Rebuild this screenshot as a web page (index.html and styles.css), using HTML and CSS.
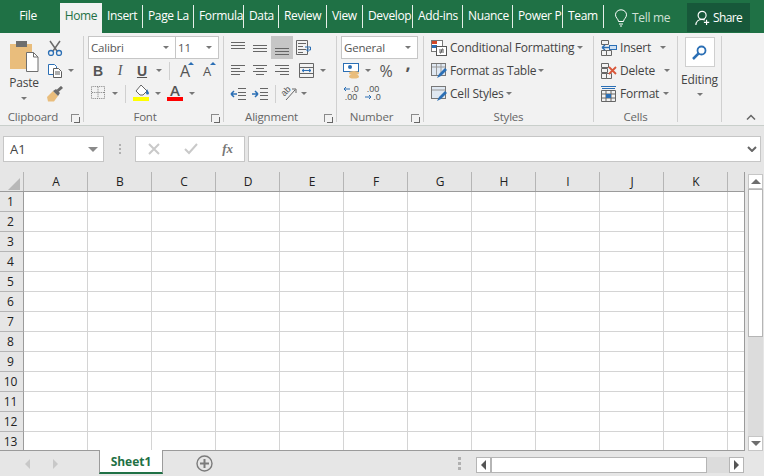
FILE: index.html
```html
<!DOCTYPE html>
<html lang="en">
<head>
<meta charset="utf-8">
<title>Excel</title>
<link rel="stylesheet" href="styles.css">
</head>
<body>
<div class="app">
  <header class="tabbar">
    <div class="tab file">File</div>
    <div class="tab home">Home</div>
    <div class="tab w41">Insert</div>
    <div class="tab w51">Page La</div>
    <div class="tab w50">Formula</div>
    <div class="tab w35">Data</div>
    <div class="tab w48">Review</div>
    <div class="tab w36">View</div>
    <div class="tab w50">Develop</div>
    <div class="tab w50">Add-ins</div>
    <div class="tab w50">Nuance</div>
    <div class="tab w50">Power P</div>
    <div class="tab w41">Team</div>
    <div class="tell">
      <svg width="14" height="18" viewBox="0 0 14 18" fill="none" stroke="#fff"><path d="M4.5 12.5C4.5 10 1.5 9 1.5 5.8a5.5 5 0 0 1 11 0C12.500 9 9.500 10 9.500 12.500z"/><path d="M5 15h4M6 17h2"/></svg>
      <span>Tell me</span>
    </div>
    <div class="share">
      <svg width="16" height="16" viewBox="0 0 18 18" fill="none" stroke="#fff" stroke-width="1.300"><circle cx="8" cy="6" r="4.500"/><path d="M1 17c0-4 3-6.500 7-6.500 1 0 2 .2 3 .6M13 11v6M10 14h6"/></svg>
      <span>Share</span>
    </div>
  </header>

  <section class="ribbon">
    <div class="group g-clip">
      <div class="body clip-body">
        <div class="paste">
          <svg width="30" height="31" viewBox="0 0 30 31"><rect x="1" y="3" width="22" height="25" fill="#e9bd7c"/><rect x="7" y="0" width="11" height="6" fill="#6e6e6e"/><path d="M17.500 11.500h7l4.500 4.500v14.500H17.500z" fill="#fff" stroke="#6e6e6e"/><path d="M24.500 11.500v4.500h4.500" fill="none" stroke="#6e6e6e"/></svg>
          <span class="paste-label">Paste</span>
          <i class="caret"></i>
        </div>
        <div class="clip-tools">
          <div class="row">
            <svg width="16" height="16" viewBox="0 0 16 16" fill="none"><path d="M3 1l7 10M13 1L6 11" stroke="#6a6a6a" stroke-width="1.500"/><circle cx="4" cy="13" r="2.500" stroke="#2b6fb5" stroke-width="1.300"/><circle cx="12" cy="13" r="2.500" stroke="#2b6fb5" stroke-width="1.300"/></svg>
          </div>
          <div class="row">
            <svg width="16" height="16" viewBox="0 0 16 16" fill="#fff" stroke="#2b6fb5"><path d="M1.500 1.500h6l2 2v8h-8z"/><path d="M6.500 5.500h5l3 3v6h-8z" stroke="#5d5d5d"/><path d="M8 9h5M8 11h5" stroke="#5d5d5d"/></svg>
            <span class="cell c10 ml3"><i class="caret"></i></span>
          </div>
          <div class="row">
            <svg width="16" height="16" viewBox="0 0 16 16"><path d="M6 5l5 5-4 5.500H1L0 11z" fill="#e9bd7c"/><path d="M6 5l3-2 4 4-2 3z" fill="#6a6a6a"/><path d="M10.500 5L15 1" stroke="#6a6a6a" stroke-width="3"/></svg>
          </div>
        </div>
      </div>
      <div class="label has-launch">Clipboard<i class="launch"></i></div>
    </div>

    <div class="group g-font">
      <div class="body tools">
        <div class="row"><div class="select s-font"><span>Calibri</span><i class="caret"></i></div><div class="select s-size"><span>11</span><i class="caret"></i></div></div>
        <div class="row gap2">
          <b class="cell c20 glyph">B</b>
          <em class="cell c20 glyph italic">I</em>
          <span class="cell c20 glyph under">U</span>
          <span class="cell c10"><i class="caret"></i></span>
          <i class="sep"></i>
          <span class="cell c20 glyph big">A<i class="up"></i></span>
          <span class="cell c20 glyph mid">A<i class="up"></i></span>
        </div>
        <div class="row gap2">
          <span class="cell c20 lift"><svg width="14" height="13" viewBox="0 0 15 14" fill="none" stroke="#777" stroke-dasharray="1 1"><path d="M.5.500h14v13H.5zM7.500 1v12M1 7h13"/></svg></span>
          <span class="cell c10"><i class="caret"></i></span>
          <i class="sep"></i>
          <span class="cell c20 lift"><svg width="17" height="18" viewBox="0 0 17 18"><path d="M3 8l5-6 6 6-4 4H7z" fill="#fff" stroke="#666"/><path d="M14 6l2 4a1.500 1.500 0 1 1-3 0z" fill="#2b6fb5"/><rect y="14" width="16" height="4" fill="#ffff00"/></svg></span>
          <span class="cell c10"><i class="caret"></i></span>
          <span class="cell c20 fontcolor lift"><span>A</span><i class="redbar"></i></span>
          <span class="cell c10"><i class="caret"></i></span>
        </div>
      </div>
      <div class="label has-launch">Font<i class="launch"></i></div>
    </div>

    <div class="group g-align">
      <div class="body tools">
        <div class="row gap2">
          <span class="cell c20"><svg class="lines" width="14" height="14" viewBox="0 0 14 14"><path d="M0 1.500h14M0 4.500h14M0 7.500h14"/></svg></span>
          <span class="cell c20"><svg class="lines" width="14" height="14" viewBox="0 0 14 14"><path d="M0 4.500h14M0 7.500h14M0 10.500h14"/></svg></span>
          <span class="cell c22 active"><svg class="lines" width="14" height="14" viewBox="0 0 14 14"><path d="M0 7.500h14M0 10.500h14M0 13.500h14"/></svg></span>
          <span class="cell c20"><svg width="16" height="15" viewBox="0 0 16 15" fill="none" stroke="#666"><path d="M.5.500h11v14H.5zM2 3.500h8M2 6.500h5M2 9.500h8M2 12.500h5"/><path d="M9 7h5.500v3H11M12.500 8.500L10.500 10l2 1.500" stroke="#2b6fb5"/></svg></span>
        </div>
        <div class="row gap2">
          <span class="cell c20"><svg class="lines" width="14" height="14" viewBox="0 0 14 14"><path d="M0 1.500h14M0 4.500h9M0 7.500h14M0 10.500h9"/></svg></span>
          <span class="cell c20"><svg class="lines" width="14" height="14" viewBox="0 0 14 14"><path d="M0 1.500h14M3 4.500h8M0 7.500h14M3 10.500h8"/></svg></span>
          <span class="cell c20"><svg class="lines" width="14" height="14" viewBox="0 0 14 14"><path d="M0 1.500h14M5 4.500h9M0 7.500h14M5 10.500h9"/></svg></span>
          <span class="cell c20 ml2"><svg width="15" height="15" viewBox="0 0 15 15" fill="none" stroke="#666"><path d="M.5.500h14v14H.5zM.5 4.500h14M.5 10.500h14"/><path d="M3 7.500h9M3 7.500l2-1.500M3 7.500L5 9M12 7.500L10 6M12 7.500L10 9" stroke="#2b6fb5"/></svg></span>
          <span class="cell c10"><i class="caret"></i></span>
        </div>
        <div class="row gap2">
          <span class="cell c20"><svg width="16" height="12" viewBox="0 0 16 12" fill="none" stroke="#666"><path d="M8 .500h8M8 4.500h8M8 7.500h8M8 11.500h8"/><path d="M7 6H1M1 6l3-3M1 6l3 3" stroke="#2b6fb5" stroke-width="1.500"/></svg></span>
          <span class="cell c20"><svg width="16" height="12" viewBox="0 0 16 12" fill="none" stroke="#666"><path d="M8 .500h8M8 4.500h8M8 7.500h8M8 11.500h8"/><path d="M0 6h6M6 6L3 3M6 6L3 9" stroke="#2b6fb5" stroke-width="1.500"/></svg></span>
          <i class="sep"></i>
          <span class="cell c16 orient"><span class="ab">ab</span><svg width="16" height="15" viewBox="0 0 16 15" fill="none" stroke="#666"><path d="M5 14L14 4M11 3h4v4"/></svg></span>
          <span class="cell c10"><i class="caret"></i></span>
        </div>
      </div>
      <div class="label has-launch">Alignment<i class="launch"></i></div>
    </div>

    <div class="group g-num">
      <div class="body tools">
        <div class="row"><div class="select s-gen"><span>General</span><i class="caret"></i></div></div>
        <div class="row gap2">
          <span class="cell c20"><svg width="17" height="16" viewBox="0 0 17 16"><rect x=".5" y=".5" width="15" height="8" fill="#fff" stroke="#2b6fb5"/><circle cx="7" cy="4" r="2" fill="#2b6fb5"/><ellipse cx="11" cy="10" rx="5" ry="2" fill="#e9bd7c"/><ellipse cx="11" cy="13.500" rx="5" ry="2" fill="#e9bd7c"/></svg></span>
          <span class="cell c10"><i class="caret"></i></span>
          <span class="cell c20 pct ml1">%</span>
          <span class="cell c20 comma">,</span>
        </div>
        <div class="row gap2">
          <span class="cell c20 dec-cell">
            <span class="dec-top"><svg width="7" height="6" viewBox="0 0 7 6" fill="none" stroke="#2b6fb5"><path d="M1 3h6M1 3l2-2M1 3l2 2"/></svg><span class="dec">.0</span></span>
            <span class="dec">.00</span>
          </span>
          <span class="cell c20 dec-cell">
            <span class="dec">.00</span>
            <span class="dec-top"><svg width="7" height="6" viewBox="0 0 7 6" fill="none" stroke="#2b6fb5"><path d="M0 3h6M6 3L4 1M6 3L4 5"/></svg><span class="dec">.0</span></span>
          </span>
        </div>
      </div>
      <div class="label has-launch">Number<i class="launch"></i></div>
    </div>

    <div class="group g-styles">
      <div class="body tools">
        <div class="row"><svg class="ic" width="16" height="16" viewBox="0 0 16 16"><rect x=".5" y=".5" width="11" height="11" fill="#fff" stroke="#777"/><rect x="1" y="1" width="5" height="3" fill="#d24726"/><rect x="1" y="5" width="5" height="3" fill="#2b6fb5"/><rect x="5.500" y="6.500" width="10" height="9" fill="#fff" stroke="#555"/><path d="M8 10h5M8 12h5M11.500 8.500l-2 5" stroke="#555"/></svg><span class="txt">Conditional Formatting</span><span class="cell c10 ml1"><i class="caret"></i></span></div>
        <div class="row"><svg class="ic" width="16" height="16" viewBox="0 0 16 16"><rect x=".5" y=".5" width="14" height="12" fill="#dfe8f2" stroke="#777"/><path d="M1 4h13M5.500 1v11M10 1v11" stroke="#999"/><path d="M6 15l2-4 6-6 2 2-6 6z" fill="#2b6fb5"/></svg><span class="txt">Format as Table</span><span class="cell c10"><i class="caret"></i></span></div>
        <div class="row"><svg class="ic" width="16" height="16" viewBox="0 0 16 16"><rect x=".5" y=".5" width="14" height="12" fill="#dfe8f2" stroke="#777"/><path d="M1 4h13" stroke="#999"/><path d="M6 15l2-4 6-6 2 2-6 6z" fill="#2b6fb5"/></svg><span class="txt">Cell Styles</span><span class="cell c10"><i class="caret"></i></span></div>
      </div>
      <div class="label">Styles</div>
    </div>

    <div class="group g-cells">
      <div class="body tools">
        <div class="row"><svg class="ic" width="16" height="16" viewBox="0 0 16 16" fill="none" stroke="#666"><path d="M.5.500h7v4h-7zM.5 10.500h5v5h-5zM5.500 10.500h5v5h-5z"/><rect x="8.500" y="5.500" width="7" height="4" fill="#cfe0f2" stroke="#2b6fb5"/><path d="M8 7.500H1M1 7.500l3-2.500M1 7.500l3 2.500" stroke="#2b6fb5" stroke-width="1.300"/></svg><span class="txt">Insert</span><span class="cell c10 ml8"><i class="caret"></i></span></div>
        <div class="row"><svg class="ic" width="16" height="16" viewBox="0 0 16 16" fill="none" stroke="#666"><path d="M.5.500h7v4h-7zM.5 5.500h6v4h-6zM.5 10.500h5v5h-5zM5.500 10.500h5v5h-5z"/><path d="M8 4l7 7M15 4l-7 7" stroke="#d9573a" stroke-width="1.800"/></svg><span class="txt">Delete</span><span class="cell c10 ml8"><i class="caret"></i></span></div>
        <div class="row"><svg class="ic" width="16" height="16" viewBox="0 0 16 16" fill="none" stroke="#666"><path d="M0 .5h15M1 2.500h13" stroke="#2b6fb5"/><path d="M.5 4.500h14v11H.5zM.5 8h14M.5 12h14M5 4.500v11M10 4.500v11"/><rect x="5" y="8" width="5" height="4" fill="#2b6fb5" stroke="none"/></svg><span class="txt">Format</span><span class="cell c10 ml2"><i class="caret"></i></span></div>
      </div>
      <div class="label">Cells</div>
    </div>

    <div class="group g-edit">
      <div class="body edit-body">
        <div class="edit-btn"><svg width="15" height="15" viewBox="0 0 15 15" fill="none" stroke="#2b6fb5" stroke-width="1.800"><circle cx="9.500" cy="5.500" r="4"/><path d="M6.500 8.500L1 14" stroke-width="2.500"/></svg></div>
        <span class="edit-label">Editing</span>
        <i class="caret"></i>
      </div>
    </div>

    <div class="collapse"><svg width="10" height="6" viewBox="0 0 10 6" fill="none" stroke="#666" stroke-width="1.500"><path d="M1 5.500l4-4 4 4"/></svg></div>
  </section>

  <section class="formula">
    <div class="namebox"><span>A1</span><i class="caret dark"></i></div>
    <div class="grip"><i></i><i></i><i></i></div>
    <div class="fx-btns">
      <svg width="12" height="12" viewBox="0 0 12 12" fill="none" stroke="#c9c9c9" stroke-width="2"><path d="M1 1l10 10M11 1L1 11"/></svg>
      <svg width="14" height="12" viewBox="0 0 14 12" fill="none" stroke="#c9c9c9" stroke-width="2"><path d="M1 6l4 4 8-9"/></svg>
      <em class="fx">fx</em>
    </div>
    <div class="fx-input"><svg width="10" height="6" viewBox="0 0 10 6" fill="none" stroke="#666" stroke-width="2"><path d="M1 1l4 4 4-4"/></svg></div>
  </section>

  <section class="sheet">
    <div class="gridwrap">
      <div class="colheads">
        <div class="corner"><i></i></div>
        <div class="ch">A</div><div class="ch">B</div><div class="ch">C</div><div class="ch">D</div><div class="ch">E</div><div class="ch">F</div><div class="ch">G</div><div class="ch">H</div><div class="ch">I</div><div class="ch">J</div><div class="ch">K</div><div class="ch-rest"></div>
      </div>
      <div class="rows">
        <div class="r"><div class="rh">1</div><div class="cells"></div></div>
        <div class="r"><div class="rh">2</div><div class="cells"></div></div>
        <div class="r"><div class="rh">3</div><div class="cells"></div></div>
        <div class="r"><div class="rh">4</div><div class="cells"></div></div>
        <div class="r"><div class="rh">5</div><div class="cells"></div></div>
        <div class="r"><div class="rh">6</div><div class="cells"></div></div>
        <div class="r"><div class="rh">7</div><div class="cells"></div></div>
        <div class="r"><div class="rh">8</div><div class="cells"></div></div>
        <div class="r"><div class="rh">9</div><div class="cells"></div></div>
        <div class="r"><div class="rh">10</div><div class="cells"></div></div>
        <div class="r"><div class="rh">11</div><div class="cells"></div></div>
        <div class="r"><div class="rh">12</div><div class="cells"></div></div>
        <div class="r last"><div class="rh">13</div><div class="cells"></div></div>
      </div>
    </div>
    <div class="vscroll">
      <div class="sbtn"><i class="tri-up"></i></div>
      <div class="vthumb"></div>
      <div class="vtrack"></div>
      <div class="sbtn"><i class="tri-down"></i></div>
    </div>
  </section>

  <footer class="bottom">
    <div class="nav"><i class="tri-left pale"></i><i class="tri-right pale"></i></div>
    <div class="sheettab">Sheet1</div>
    <div class="addsheet"><svg width="17" height="17" viewBox="0 0 17 17" fill="none" stroke="#7b7b7b"><circle cx="8.500" cy="8.500" r="7.500" stroke-width="1.400"/><path d="M8.500 4v9M4 8.500h9" stroke-width="2"/></svg></div>
    <div class="grip h"><i></i><i></i><i></i></div>
    <div class="hscroll">
      <div class="hbtn"><i class="tri-left"></i></div>
      <div class="hthumb"></div>
      <div class="htrack"></div>
      <div class="hbtn"><i class="tri-right"></i></div>
    </div>
  </footer>
</div>
</body>
</html>
```

FILE: styles.css
```css
* { box-sizing: border-box; }
html, body { margin: 0; padding: 0; overflow: hidden; }
body { font-family: "Open Sans", "Noto Sans", sans-serif; font-size: 12px; color: #444; }
i { display: block; font-style: normal; }
.app { width: 764px; height: 476px; display: flex; flex-direction: column; background: #e6e6e6; overflow: hidden; }

/* tab bar */
.tabbar { height: 33px; background: #1f7145; display: flex; align-items: flex-end; color: #fff; flex: none; }
.tab { height: 23px; margin-bottom: 5px; padding-left: 5px; line-height: 22px; border-right: 1px solid #e6efe9; overflow: hidden; white-space: nowrap; letter-spacing: -.35px; flex: none; }
.tab.file { width: 56px; padding: 0; border: 0; text-align: center; }
.tab.home { width: 42px; height: 30px; margin: 0 0 0 4px; padding: 2px 0 0; border: 0; text-align: center; background: #f2f2f2; color: #1f7145; letter-spacing: -.4px; }
.w35 { width: 35px; } .w36 { width: 36px; } .w41 { width: 41px; } .w48 { width: 48px; } .w50 { width: 50px; } .w51 { width: 51px; }
.tell { display: flex; align-items: center; gap: 4px; height: 29px; margin-left: 10px; width: 73px; color: #cfe0d6; letter-spacing: -.3px; flex: none; align-self: flex-end; margin-bottom: 1px; }
.share { display: flex; align-items: center; gap: 2px; width: 63px; height: 29px; padding-left: 8px; background: #17583a; letter-spacing: -.6px; flex: none; margin-bottom: 1px; }

/* ribbon */
.ribbon { height: 93px; background: #f2f2f2; border-bottom: 1px solid #c9cfcb; display: flex; position: relative; flex: none; }
.group { display: flex; flex-direction: column; height: 86px; margin-top: 3px; border-right: 1px solid #d0d0d0; flex: none; }
.g-clip { width: 84px; } .g-font { width: 140px; } .g-align { width: 113px; } .g-num { width: 87px; } .g-styles { width: 170px; } .g-cells { width: 84px; } .g-edit { width: 44px; }
.body { flex: 1; min-height: 0; }
.label { height: 19px; line-height: 28px; text-align: center; position: relative; color: #666; letter-spacing: -.2px; font-size: 11.5px; flex: none; }
.has-launch { padding-right: 17px; }
.launch { position: absolute; right: 4px; top: 11px; width: 8px; height: 8px; border: 1px solid #8a8a8a; border-width: 1px 0 0 1px; }
.launch::after { content: ""; position: absolute; right: -1px; bottom: -1px; width: 5px; height: 5px; border: 1px solid #666; border-width: 0 1px 1px 0; }

.tools { display: flex; flex-direction: column; padding-left: 4px; }
.row { height: 23px; display: flex; align-items: center; flex: none; }
.gap2 { gap: 2px; }
.cell { display: flex; align-items: center; justify-content: center; flex: none; height: 23px; position: relative; }
.c10 { width: 10px; } .c16 { width: 16px; } .c20 { width: 20px; } .c22 { width: 22px; }
.ml1 { margin-left: 1px; } .ml2 { margin-left: 2px; } .ml3 { margin-left: 3px; } .ml8 { margin-left: 7px; }
.lift { padding-bottom: 3px; }
.caret { width: 0; height: 0; border-left: 3px solid transparent; border-right: 3px solid transparent; border-top: 3px solid #777; flex: none; }
.caret.dark { border-left-width: 5px; border-right-width: 5px; border-top-width: 5px; border-top-color: #8a8a8a; }
.sep { width: 1px; height: 18px; margin: 0 3px; background: #d0d0d0; flex: none; }
.active { background: #c6c6c6; margin-left: -1px; margin-right: -1px; }
.lines { fill: none; stroke: #666; }
.orient svg { position: absolute; left: 0; top: 4px; }
.ab { display: block; font-size: 9px; line-height: 9px; font-family: "Liberation Sans", sans-serif; color: #555; transform: translate(-3px, -2px) rotate(-45deg); }

/* clipboard */
.clip-body { display: flex; padding-left: 8px; }
.paste { width: 32px; display: flex; flex-direction: column; align-items: center; padding-top: 5px; }
.paste-label { margin-top: 2px; color: #444; line-height: 18px; letter-spacing: -.2px; }
.paste .caret { margin-top: 5px; }
.clip-tools { padding: 0 0 0 7px; display: flex; flex-direction: column; }

/* selects */
.select { height: 23px; background: #fff; border: 1px solid #c6c6c6; display: flex; align-items: center; justify-content: space-between; padding: 0 6px 0 2px; flex: none; color: #555; font-size: 11.5px; letter-spacing: -.2px; }
.s-font { width: 88px; } .s-size { width: 44px; margin-left: -1px; } .s-gen { width: 77px; }
.glyph { font-family: "Liberation Sans", sans-serif; color: #555; font-size: 14px; }
.italic { font-family: "Liberation Serif", serif; font-style: italic; }
.under { font-weight: bold; text-decoration: underline; }
.big { font-size: 16px; font-family: "Open Sans", sans-serif; }
.mid { font-size: 13px; font-family: "Open Sans", sans-serif; }
.up { position: absolute; right: 1px; top: 3px; width: 0; height: 0; border-left: 3px solid transparent; border-right: 3px solid transparent; border-bottom: 3px solid #2b6fb5; }
.fontcolor { flex-direction: column; font-size: 15px; font-weight: 600; color: #555; }
.fontcolor span { line-height: 13px; }
.redbar { width: 16px; height: 4px; background: #f00; }

.pct { font-size: 16px; color: #555; }
.comma { font-size: 18px; font-weight: 700; color: #555; padding-bottom: 16px; }
.dec-cell { flex-direction: column; align-items: center; padding-bottom: 2px; }
.dec-top { display: flex; align-items: center; gap: 1px; }
.dec { display: block; font-size: 9px; line-height: 8px; font-family: "Liberation Sans", sans-serif; color: #555; }

.g-styles .tools, .g-cells .tools { padding-left: 7px; }
.txt { margin-left: 3px; white-space: nowrap; letter-spacing: -.2px; font-size: 12px; color: #444; }
.ic { flex: none; }

.edit-body { display: flex; flex-direction: column; align-items: center; }
.edit-btn { width: 30px; height: 30px; margin-top: 1px; background: #fff; border: 1px solid #cfcfcf; display: flex; align-items: center; justify-content: center; }
.edit-label { margin-top: 4px; line-height: 18px; letter-spacing: -.2px; }
.edit-body .caret { margin-top: 4px; }
.collapse { position: absolute; left: 746px; top: 81px; line-height: 0; }

/* formula */
.formula { height: 46px; padding: 10px 3px 10px; display: flex; align-items: stretch; flex: none; }
.namebox { width: 101px; background: #fff; border: 1px solid #c6c6c6; display: flex; align-items: center; justify-content: space-between; padding: 0 5px 0 6px; color: #444; font-size: 13px; }
.grip { width: 31px; display: flex; flex-direction: column; align-items: center; justify-content: center; gap: 2px; }
.grip i { width: 2px; height: 2px; background: #b0b0b0; }
.fx-btns { width: 110px; background: #fff; border: 1px solid #c6c6c6; display: flex; align-items: center; justify-content: space-between; padding: 0 11px 0 12px; }
.fx { font-family: "Liberation Serif", serif; font-weight: bold; color: #777; font-size: 13px; }
.fx-input { flex: 1; margin-left: 3px; background: #fff; border: 1px solid #c6c6c6; display: flex; align-items: center; justify-content: flex-end; padding-right: 3px; }

/* sheet */
.sheet { height: 279px; display: flex; flex: none; }
.gridwrap { width: 745px; display: flex; flex-direction: column; flex: none; border-bottom: 1px solid #9b9b9b; border-right: 1px solid #9b9b9b; }
.colheads { height: 20px; display: flex; flex: none; border-bottom: 1px solid #9b9b9b; }
.corner { width: 24px; position: relative; border-right: 1px solid #b5b5b5; }
.corner i { position: absolute; right: 3px; bottom: 1px; width: 0; height: 0; border-left: 12px solid transparent; border-bottom: 12px solid #b8b8b8; }
.ch { width: 64px; text-align: center; color: #222; line-height: 19px; border-right: 1px solid #b5b5b5; padding-left: 1px; flex: none; }
.ch-rest { flex: 1; }
.rows { flex: 1; background: #fff; display: flex; flex-direction: column; overflow: hidden; }
.r { height: 20px; display: flex; flex: none; border-bottom: 1px solid #d4d4d4; }
.r.last { border-bottom: 0; }
.rh { width: 24px; background: #e6e6e6; border-right: 1px solid #9b9b9b; border-bottom: 1px solid #b5b5b5; margin-bottom: -1px; text-align: center; line-height: 20px; color: #222; padding-right: 2px; flex: none; }
.cells { flex: 1; background: repeating-linear-gradient(to right, transparent 0, transparent 63px, #d4d4d4 63px, #d4d4d4 64px); }

.vscroll { width: 19px; padding: 2px 1px 0 3px; display: flex; flex-direction: column; flex: none; height: 279px; }
.sbtn { height: 15px; background: #fff; border: 1px solid #c6c6c6; display: flex; align-items: center; justify-content: center; flex: none; }
.vthumb { height: 148px; background: #fff; border: 1px solid #b5b5b5; flex: none; }
.vtrack { flex: 1; background: #dcdcdc; }
.tri-up { border-left: 5px solid transparent; border-right: 5px solid transparent; border-bottom: 5px solid #6e6e6e; width: 0; height: 0; }
.tri-down { border-left: 5px solid transparent; border-right: 5px solid transparent; border-top: 5px solid #6e6e6e; width: 0; height: 0; }
.tri-left { border-top: 5px solid transparent; border-bottom: 5px solid transparent; border-right: 5px solid #555; width: 0; height: 0; }
.tri-right { border-top: 5px solid transparent; border-bottom: 5px solid transparent; border-left: 5px solid #555; width: 0; height: 0; }
.pale { border-left-color: #c8c8c8; border-right-color: #c8c8c8; }

/* bottom */
.bottom { flex: 1; display: flex; align-items: flex-start; background: #e6e6e6; }
.nav { width: 99px; height: 25px; padding: 0 41px 0 25px; display: flex; align-items: center; justify-content: space-between; flex: none; }
.sheettab { width: 64px; height: 24px; margin-top: -1px; background: #fff; border: 1px solid #9b9b9b; border-top: 0; border-bottom: 2px solid #1f7145; text-align: center; line-height: 24px; font-weight: 700; color: #1f7145; flex: none; }
.addsheet { width: 83px; height: 25px; display: flex; align-items: center; justify-content: center; flex: none; line-height: 0; }
.grip.h { width: 230px; height: 25px; align-items: flex-end; padding-right: 15px; flex: none; }
.grip.h i { width: 3px; height: 3px; }
.hscroll { width: 268px; height: 16px; margin-top: 6px; display: flex; flex: none; }
.hbtn { width: 15px; height: 16px; background: #fff; border: 1px solid #b5b5b5; display: flex; align-items: center; justify-content: center; flex: none; }
.hthumb { width: 216px; background: #fff; border: 1px solid #b5b5b5; flex: none; }
.htrack { flex: 1; background: #dcdcdc; }
```
